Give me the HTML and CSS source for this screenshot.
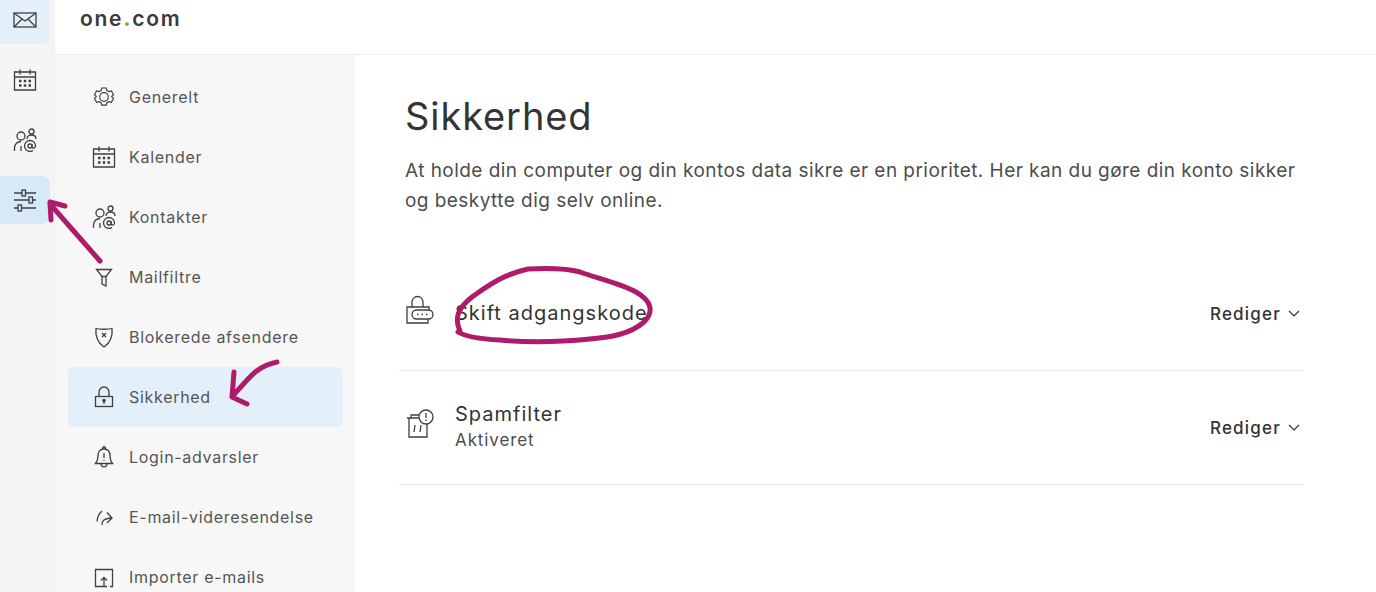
FILE: index.html
```html
<!DOCTYPE html>
<html lang="en">
<head>
    <meta charset="UTF-8">
    <meta name="viewport" content="width=device-width, initial-scale=1.0">
    <title>Sikkerhed</title>
    <link rel="stylesheet" href="styles.css">
</head>
<body>

    <nav class="rail">
        <a class="rail-item rail-mail">
            <svg class="icon" viewBox="0 0 24 24"><rect x="1" y="5" width="22" height="14"/><path d="M1 5l11 8 11-8M1 19l8-8M23 19l-8-8"/></svg>
        </a>
        <a class="rail-item">
            <svg class="icon" viewBox="0 0 24 24"><use href="#i-calendar"/></svg>
        </a>
        <a class="rail-item">
            <svg class="icon" viewBox="0 0 24 24"><use href="#i-contacts"/></svg>
        </a>
        <a class="rail-item rail-active">
            <svg class="icon" viewBox="0 0 24 24"><path d="M1 5h8M12 5h11M1 12h15M19 12h4M1 20h4M8 20h15"/><rect x="9" y="2" width="3.500" height="6"/><rect x="16" y="9" width="3.500" height="6"/><rect x="5" y="17" width="3.500" height="6"/></svg>
        </a>
    </nav>

    <div class="page">
        <header class="topbar">
            <span class="logo">one<b>.</b>com</span>
        </header>

        <div class="columns">
            <aside class="sidebar">
                <a class="side-item">
                    <svg class="icon" viewBox="0 0 24 24"><g transform="translate(1.200 1.200) scale(.9)"><path d="M9.500 2.500h5l.7 2.800 2.200 1.200 2.800-.8 2.400 4.300-2.100 2 0 .1 2.100 2-2.400 4.300-2.800-.8-2.200 1.200-.7 2.700h-5l-.7-2.700-2.200-1.200-2.800.8-2.400-4.300 2.100-2 0-.1-2.100-2 2.400-4.300 2.800.8 2.200-1.200z" transform="translate(0 -.5)"/><circle cx="12" cy="12" r="4.800"/></g></svg>
                    Generelt
                </a>
                <a class="side-item">
                    <svg class="icon" viewBox="0 0 24 24"><use href="#i-calendar"/></svg>
                    Kalender
                </a>
                <a class="side-item">
                    <svg class="icon" viewBox="0 0 24 24"><use href="#i-contacts"/></svg>
                    Kontakter
                </a>
                <a class="side-item">
                    <svg class="icon" viewBox="0 0 24 24"><path d="M4.500 4.500h15l-5.500 7v9.500l-4-2v-7.500zM10 11.500h4"/></svg>
                    Mailfiltre
                </a>
                <a class="side-item">
                    <svg class="icon" viewBox="0 0 24 24"><path d="M4 3.500c3 1 13 1 16 0 .8 7-1.500 14-8 18.500-6.500-4.500-8.800-11.500-8-18.500zM10 8l4 4M14 8l-4 4"/></svg>
                    Blokerede afsendere
                </a>
                <a class="side-item side-active">
                    <svg class="icon" viewBox="0 0 24 24"><rect x="3.500" y="11.500" width="17" height="10"/><path d="M7 11.500V7a5 5 0 0 1 10 0v4.500"/><circle class="solid" cx="12" cy="15.500" r="1.100"/><path d="M12 16v3"/></svg>
                    Sikkerhed
                </a>
                <a class="side-item">
                    <svg class="icon" viewBox="0 0 24 24"><path d="M12 4c4.500 0 6 3.500 6 7s.8 5.500 2.500 7.500h-17C5.200 16.500 6 14.500 6 11s1.500-7 6-7zM10.500 4c0-3 3-3 3 0M9 18.500c0 4.500 6 4.500 6 0M12 8v5M12 14.800v1"/></svg>
                    Login-advarsler
                </a>
                <a class="side-item">
                    <svg class="icon" viewBox="0 0 24 24"><path d="M10 20c-.5-4 2-6.500 9.500-7M15 7.500l5 5.500-5 5M5 16.500c.3-4 2-8 5-10.500"/></svg>
                    E-mail-videresendelse
                </a>
                <a class="side-item">
                    <svg class="icon" viewBox="0 0 24 24"><path d="M15 21.500H3.500v-17h17v17H18M12 21v-8M9 15.500l3-3 3 3"/></svg>
                    Importer e-mails
                </a>
            </aside>

            <main class="content">
                <h1>Sikkerhed</h1>
                <p class="intro">At holde din computer og din kontos data sikre er en prioritet. Her kan du gøre din konto sikker og beskytte dig selv online.</p>

                <div class="settings">
                    <div class="setting">
                        <svg class="setting-icon" viewBox="0 0 28 32"><path d="M23 18v-3H1v16h21v-4M6 15v-5a5.500 5.500 0 0 1 11 0v5"/><rect x="6" y="18" width="21" height="9" rx="4.500"/><path d="M11 22.500h1.500M15.500 22.500h1.500M20 22.500h1.500"/></svg>
                        <div class="setting-text">
                            <div class="setting-name">Skift adgangskode</div>
                        </div>
                        <a class="edit">Rediger <svg class="chevron" viewBox="0 0 12 8"><path d="M1 1l5 5 5-5"/></svg></a>
                    </div>
                    <div class="setting">
                        <svg class="setting-icon" viewBox="0 0 28 32"><path d="M1 12h12M3 12l0 19h18V18M5 12V9h8M9 19l-1 7M15 19l-1 7"/><circle cx="20" cy="11" r="7"/><path d="M20 7v5M20 13.500v1.500"/></svg>
                        <div class="setting-text">
                            <div class="setting-name">Spamfilter</div>
                            <div class="setting-status">Aktiveret</div>
                        </div>
                        <a class="edit">Rediger <svg class="chevron" viewBox="0 0 12 8"><path d="M1 1l5 5 5-5"/></svg></a>
                    </div>
                </div>
            </main>
        </div>
    </div>

    <!-- hand drawn marks on top of the screenshot -->
    <svg class="marks" viewBox="0 0 1376 592">
        <path d="M100 261L50 204M65 206L50 202L51 220"/>
        <path d="M277 362C258 366 252 374 232 397M234 372L232 397L247 404"/>
        <path d="M460 331C454 318 458 308 472 297C490 284 505 274 528 269C548 268 566 268 580 272C596 278 620 283 636 292C652 301 654 312 644 322C630 334 612 337 590 339C560 342 530 343 500 340C480 339 466 337 458 332"/>
    </svg>

    <svg class="defs" width="0" height="0">
        <defs>
            <g id="i-calendar">
                <path d="M1.500 4h21v18h-21zM1.500 9h21M7 1.500v5M17 1.500v5"/>
                <path d="M6 13h2.500M10.750 13h2.500M15.500 13h2.500M6 17.500h2.500M10.750 17.500h2.500M15.500 17.500h2.500" stroke-width="2.500"/>
            </g>
            <g id="i-contacts">
                <circle cx="8" cy="8" r="4"/>
                <path d="M1.500 23v-3c0-4 3-6.500 6.500-6.500M8 18v5"/>
                <circle cx="18.500" cy="3.500" r="2.500"/>
                <path d="M14 11c0-2.500 2-4 4.500-4s4.500 1.500 4.500 4"/>
                <circle cx="17" cy="18" r="2"/>
                <path d="M22.500 18c0-3-2.500-5.500-5.500-5.500s-5.500 2.500-5.500 5.500 2.500 5.500 5.500 5.500c1.200 0 2.200-.3 3-.9M19 16v3c0 1.500 3.500 1.500 3.500-1"/>
            </g>
        </defs>
    </svg>

</body>
</html>
```

FILE: styles.css
```css
* {
    box-sizing: border-box;
}
body {
    font-family: Inter, "Liberation Sans", sans-serif;
    margin: 0;
    height: 592px;
    overflow: hidden;
    display: flex;
    background: #ffffff;
    color: #333;
}
.icon {
    width: 24px;
    height: 24px;
    fill: none;
    stroke: #3c4044;
    stroke-width: 1.3;
    flex-shrink: 0;
}
.solid {
    fill: #3c4044;
}
.defs {
    position: absolute;
}

/* left icon rail */
.rail {
    width: 55px;
    flex-shrink: 0;
    background: #f5f5f5;
    border-right: 1px solid #f0f0f0;
    display: flex;
    flex-direction: column;
    gap: 12px;
    margin-top: -4px;
}
.rail-item {
    width: 50px;
    height: 48px;
    display: flex;
    align-items: center;
    justify-content: center;
    border-radius: 0 8px 8px 0;
}
.rail-mail {
    background: #e3f0f9;
}
.rail-active {
    background: #d7e9f7;
}

.page {
    flex: 1;
    min-width: 0;
}
.topbar {
    height: 55px;
    padding: 0 25px 17px;
    border-bottom: 1px solid #eeeeee;
    display: flex;
    align-items: center;
}
.logo {
    font-size: 21px;
    font-weight: 600;
    letter-spacing: 1.7px;
    color: #3a3a3a;
}
.logo b {
    color: #76b82a;
    font-weight: 800;
}
.columns {
    display: flex;
    height: 537px;
}

/* settings menu */
.sidebar {
    width: 300px;
    flex-shrink: 0;
    background: #f7f7f7;
    padding: 12px 12px 0 13px;
    overflow: hidden;
}
.side-item {
    height: 60px;
    padding-left: 24px;
    display: flex;
    align-items: center;
    gap: 13px;
    font-size: 16px;
    letter-spacing: 0.7px;
    color: #555555;
    border-radius: 6px;
}
.side-active {
    background: #e3f0f9;
}

/* main part */
.content {
    flex: 1;
    padding: 0 72px 0 44px;
}
h1 {
    font-size: 38px;
    font-weight: 400;
    letter-spacing: 0.9px;
    line-height: 44px;
    margin: 39px 0 18px 6px;
    color: #333;
}
.intro {
    font-size: 19px;
    letter-spacing: 0.45px;
    line-height: 30px;
    margin: 0 0 0 6px;
    color: #4d4d4d;
}
.settings {
    margin-top: 41px;
}
.setting {
    height: 114px;
    padding: 0 4px 0 7px;
    border-bottom: 1px solid #e8e8e8;
    display: flex;
    align-items: center;
}
.setting-icon {
    width: 28px;
    height: 32px;
    margin: 0 21px 12px 0;
    fill: none;
    stroke: #3c4044;
    stroke-width: 1.3;
    flex-shrink: 0;
}
.setting-text {
    flex: 1;
    padding-bottom: 2px;
}
.setting-name {
    font-size: 20px;
    letter-spacing: 1px;
    line-height: 24px;
    color: #333;
}
.setting-status {
    font-size: 17px;
    letter-spacing: 0.9px;
    line-height: 22px;
    margin-top: 3px;
    color: #4d4d4d;
}
.edit {
    font-size: 17px;
    font-weight: 500;
    letter-spacing: 1.2px;
    color: #333;
    display: flex;
    align-items: center;
    gap: 7px;
}
.chevron {
    width: 12px;
    height: 8px;
    fill: none;
    stroke: #333;
    stroke-width: 1.2;
}

/* the marks drawn over the page */
.marks {
    position: absolute;
    left: 0;
    top: 0;
    width: 1376px;
    height: 592px;
    fill: none;
    stroke: #b01a6b;
    stroke-width: 5;
    stroke-linecap: round;
    stroke-linejoin: round;
    pointer-events: none;
}
```
